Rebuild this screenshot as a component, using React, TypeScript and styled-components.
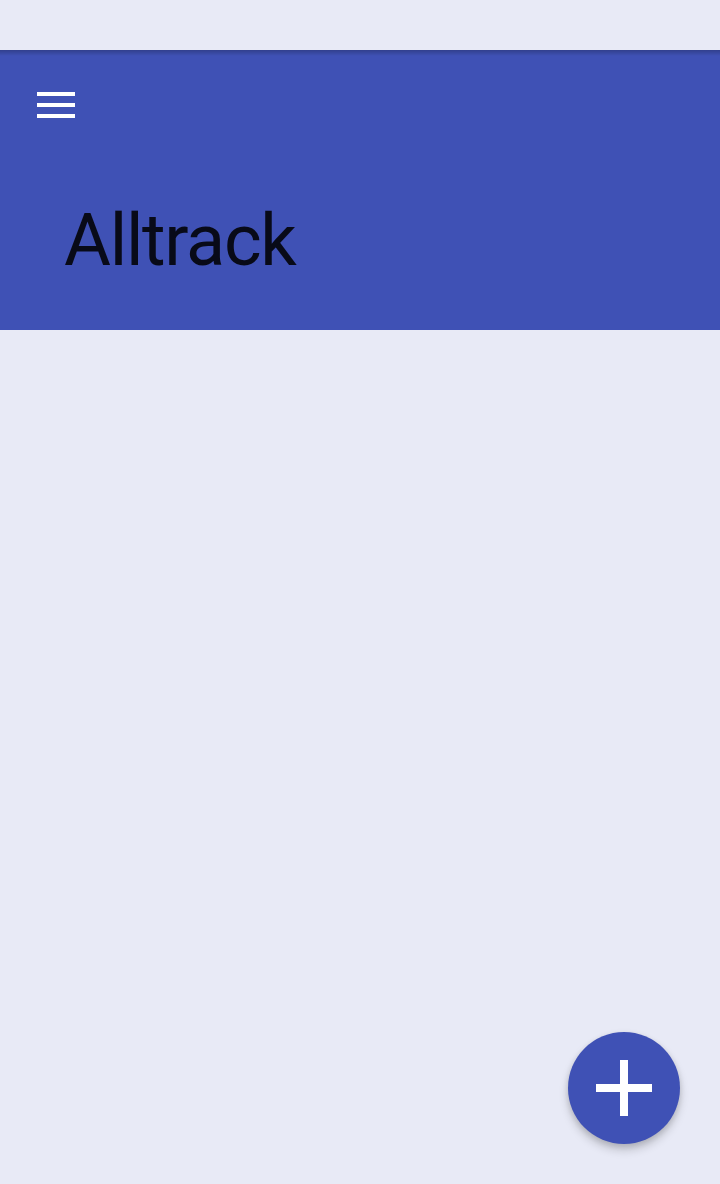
import React from 'react';
import styled, { createGlobalStyle } from 'styled-components';

const GlobalStyle = createGlobalStyle`
  html, body {
    margin: 0;
    padding: 0;
    background: #e8eaf6;
    font-family: Roboto, "Liberation Sans", sans-serif;
  }
  * {
    box-sizing: border-box;
  }
`;

const Screen = styled.div`
  display: flex;
  flex-direction: column;
  min-height: 1184px;
  background: #e8eaf6;
`;

const StatusBar = styled.div`
  height: 50px;
  background: #e8eaf6;
`;

const AppBar = styled.header`
  display: flex;
  flex-direction: column;
  height: 280px;
  padding: 42px 24px 0 37px;
  background: linear-gradient(rgba(0, 0, 0, 0.22), rgba(0, 0, 0, 0) 6px),
    #3f51b5;
`;

const MenuButton = styled.button`
  display: flex;
  flex-direction: column;
  justify-content: space-between;
  width: 38px;
  height: 26px;
  padding: 0;
  border: none;
  background: transparent;
  cursor: pointer;
`;

const Bar = styled.span`
  display: block;
  width: 38px;
  height: 4px;
  background: #ffffff;
`;

const Title = styled.h1`
  margin: 81px 0 0 27px;
  font-family: Roboto, "Liberation Sans", sans-serif;
  font-size: 72px;
  font-weight: 400;
  line-height: 84px;
  letter-spacing: -1.3px;
  color: rgba(0, 0, 0, 0.87);
`;

const Content = styled.main`
  flex: 1;
`;

const Fab = styled.button`
  position: fixed;
  right: 40px;
  bottom: 40px;
  display: flex;
  align-items: center;
  justify-content: center;
  width: 112px;
  height: 112px;
  padding: 0;
  border: none;
  border-radius: 50%;
  background: #3f51b5;
  box-shadow: 0 6px 10px rgba(0, 0, 0, 0.18), 0 2px 6px rgba(0, 0, 0, 0.12);
  cursor: pointer;
`;

const App = () => (
  <>
    <GlobalStyle />
    <Screen>
      <StatusBar />
      <AppBar>
        <MenuButton type="button" aria-label="Menu">
          <Bar />
          <Bar />
          <Bar />
        </MenuButton>
        <Title>Alltrack</Title>
      </AppBar>
      <Content />
    </Screen>
    <Fab type="button" aria-label="Add">
      <svg width="56" height="56" viewBox="0 0 56 56">
        <rect x="24" y="0" width="8" height="56" fill="#ffffff" />
        <rect x="0" y="24" width="56" height="8" fill="#ffffff" />
      </svg>
    </Fab>
  </>
);

export default App;
